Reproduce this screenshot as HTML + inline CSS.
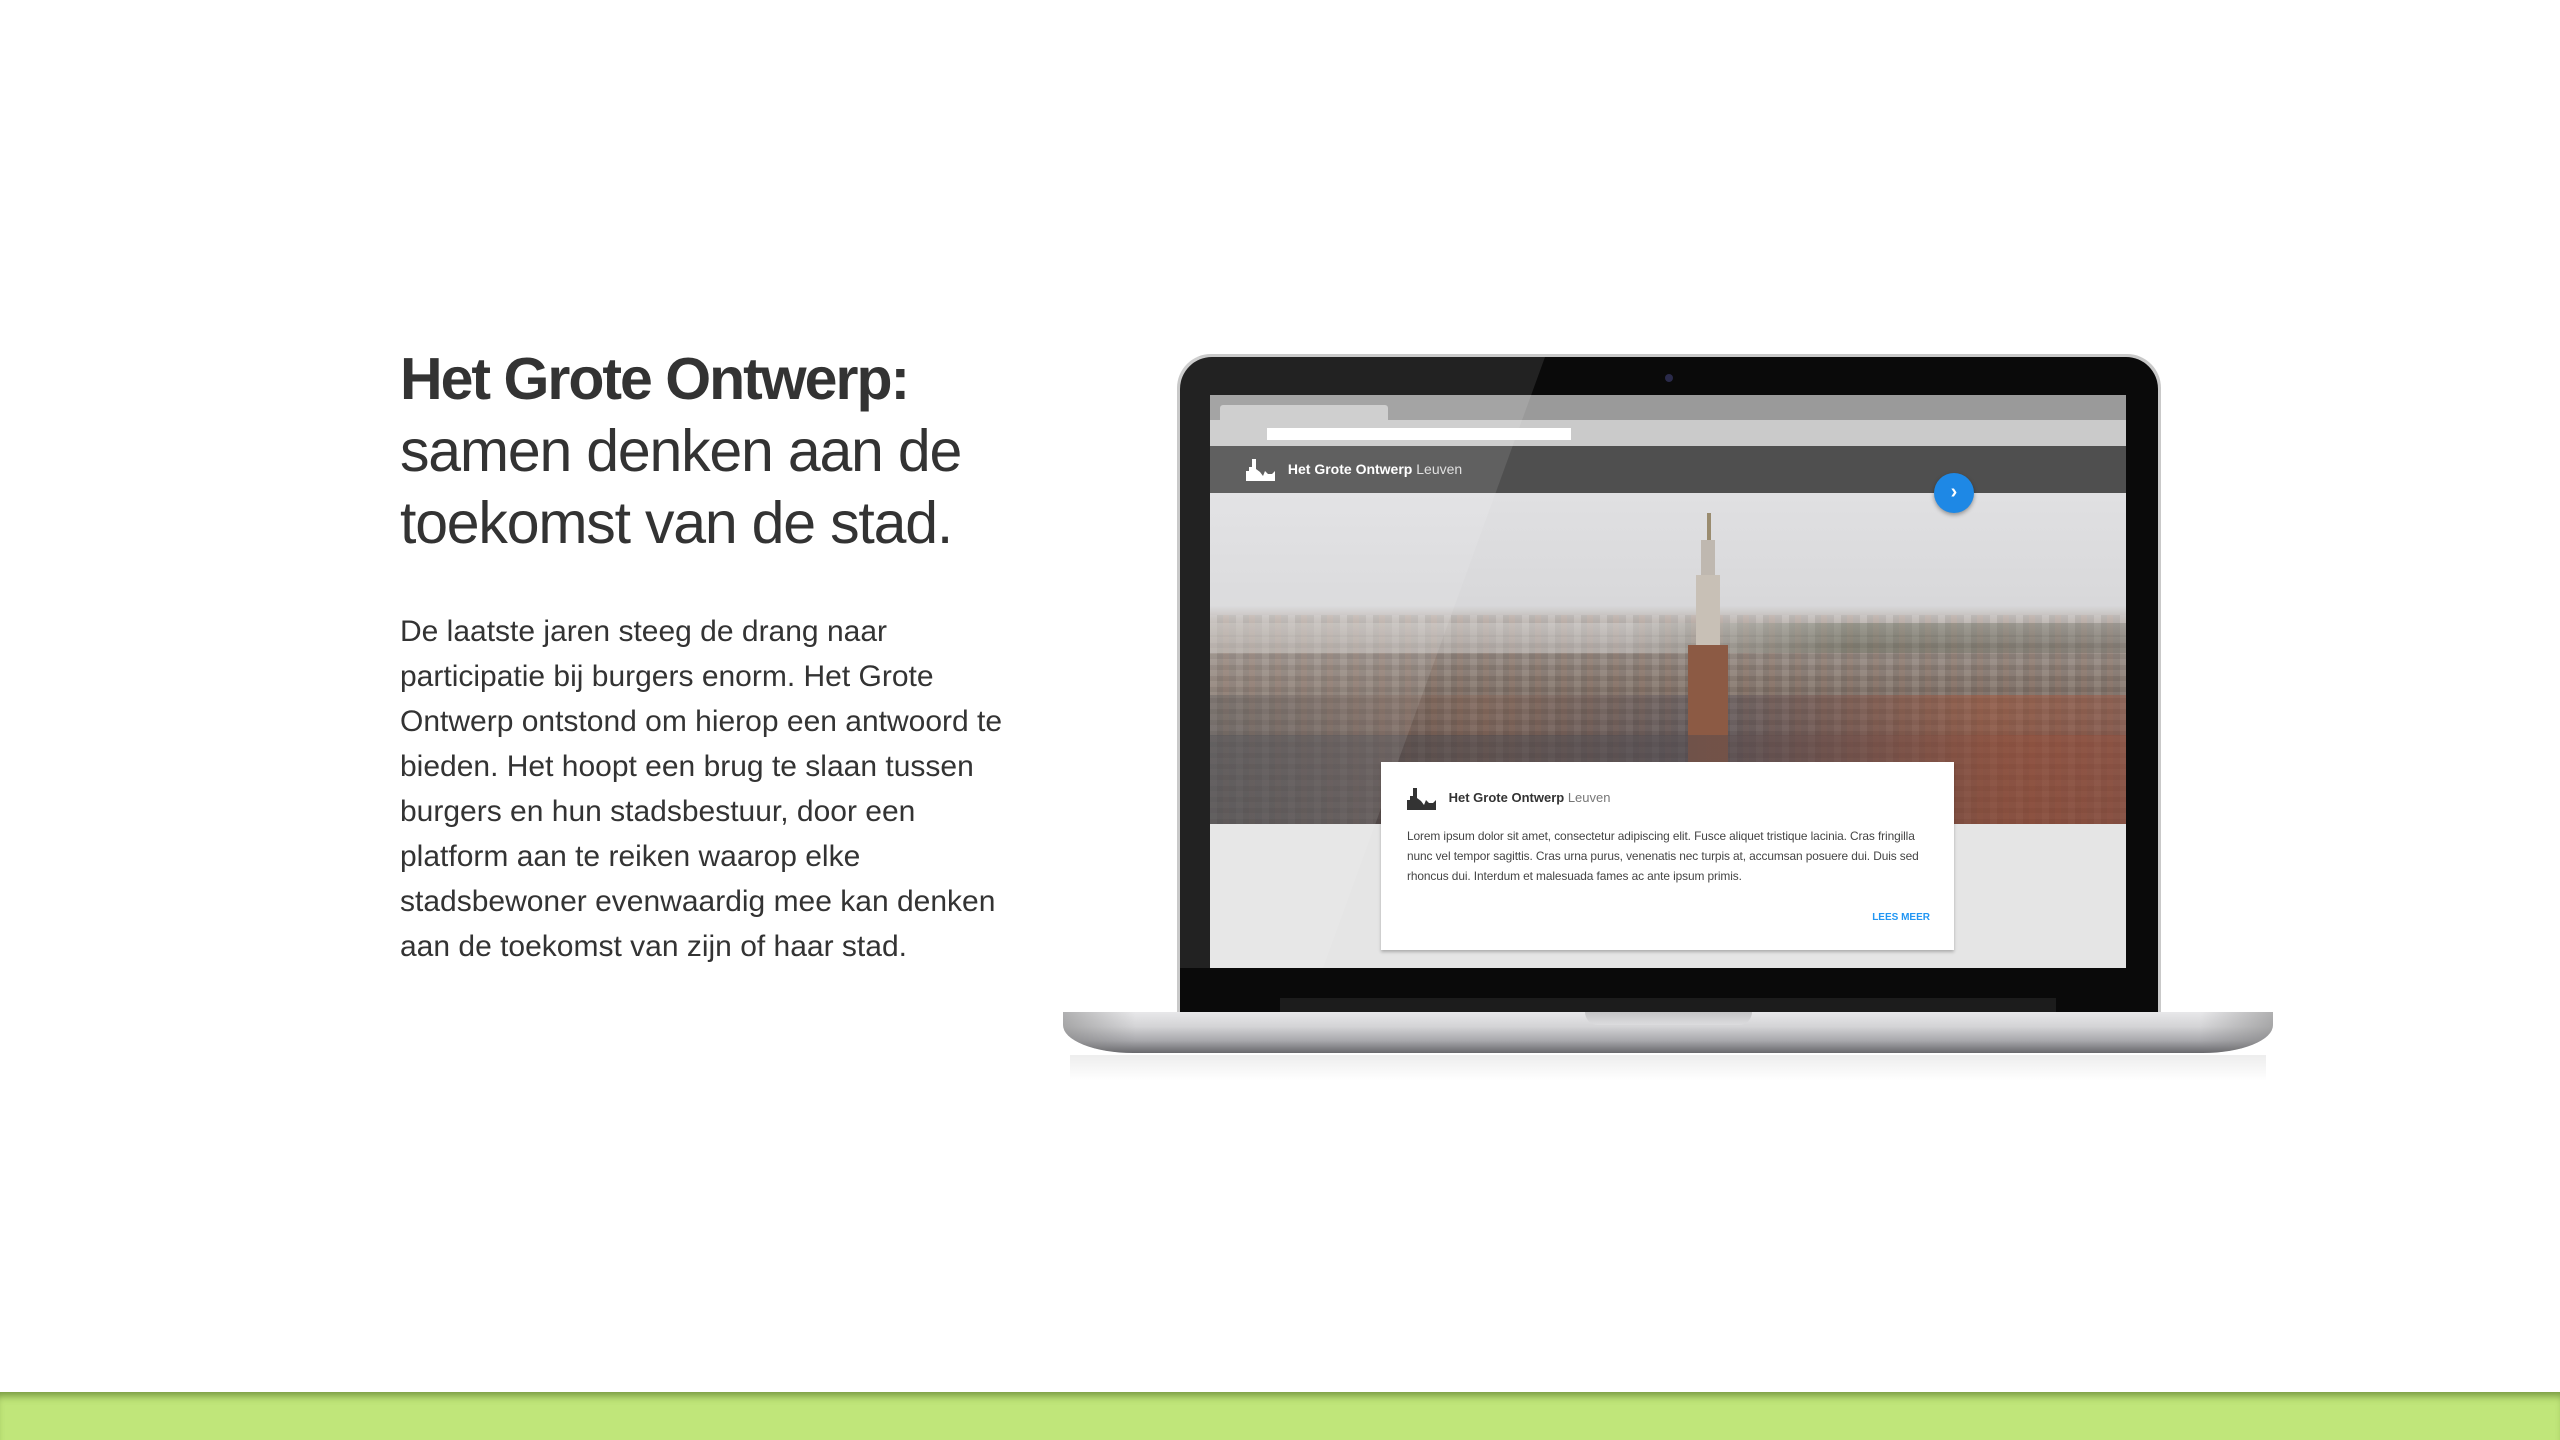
<!DOCTYPE html>
<html><head><meta charset="utf-8"><style>
*{margin:0;padding:0;box-sizing:border-box}
body{width:2560px;height:1440px;background:#fff;position:relative;overflow:hidden;font-family:"Liberation Sans",sans-serif;color:#333}
.abs{position:absolute}
h1{position:absolute;left:400px;top:343px;font-size:59px;line-height:72px;font-weight:normal;letter-spacing:-1.2px;color:#333}
h1 b{font-weight:bold;letter-spacing:-2px}
p.t{position:absolute;left:400px;top:609px;width:612px;font-size:30px;line-height:45px;color:#333}
.green{left:0;top:1392px;width:2560px;height:48px;background:#c0e67a;box-shadow:inset 0 8px 8px -4px rgba(60,90,20,.55)}
.logo{display:inline-block;vertical-align:middle}
</style></head><body>
<h1><b>Het Grote Ontwerp:</b><br>samen denken aan de<br>toekomst van de stad.</h1>
<p class="t">De laatste jaren steeg de drang naar participatie bij burgers enorm. Het Grote Ontwerp ontstond om hierop een antwoord te bieden. Het hoopt een brug te slaan tussen burgers en hun stadsbestuur, door een platform aan te reiken waarop elke stadsbewoner evenwaardig mee kan denken aan de toekomst van zijn of haar stad.</p>

<!-- laptop lid -->
<div class="abs" style="left:1177px;top:354px;width:984px;height:662px;border-radius:34px 34px 0 0;background:#c9c9c9"></div>
<div class="abs" style="left:1180px;top:357px;width:978px;height:656px;border-radius:32px 32px 0 0;background:#0a0a0a"></div>
<div class="abs" style="left:1665px;top:374px;width:8px;height:8px;border-radius:50%;background:#2a2a4a"></div>
<div class="abs" style="left:1280px;top:998px;width:776px;height:14px;background:#1c1c1c"></div>
<!-- screen -->
<div class="abs" style="left:1210px;top:395px;width:916px;height:573px;background:#e5e5e5;overflow:hidden">
  <div class="abs" style="left:0;top:0;width:916px;height:25px;background:#9a9a9a"></div>
  <div class="abs" style="left:10px;top:10px;width:168px;height:16px;background:#cacaca;border-radius:3px 3px 0 0"></div>
  <div class="abs" style="left:0;top:25px;width:916px;height:26px;background:#cacaca"></div>
  <div class="abs" style="left:57px;top:33px;width:304px;height:12px;background:#fff"></div>
  <div class="abs" style="left:0;top:51px;width:916px;height:47px;background:#4f4f4f;color:#fff;font-size:14px;line-height:47px;padding-left:36px">
    <svg class="logo" width="34" height="22" viewBox="0 0 34 22"><path d="M0 22V12h3V8h3V0h4v10l4 3 3 4 2-5 3 3h4l3-3v10z" fill="#fff"/></svg>
    <span style="margin-left:4px"><b>Het Grote Ontwerp</b> <span style="color:#ddd">Leuven</span></span>
  </div>
  <!-- photo -->
  <div class="abs" style="left:0;top:98px;width:916px;height:331px;background:linear-gradient(#e0e0e2 0%,#d8d8da 34%,#c2bcb8 38%,#9a8f88 46%,#85766c 58%,#736660 72%,#625854 100%)"></div>
  <div class="abs" style="left:0;top:220px;width:916px;height:209px;background:repeating-linear-gradient(90deg,rgba(255,255,255,.06) 0 7px,rgba(0,0,0,.06) 7px 13px,rgba(160,80,50,.08) 13px 19px,rgba(40,40,50,.06) 19px 26px)"></div>
  <div class="abs" style="left:0;top:240px;width:916px;height:189px;background:repeating-linear-gradient(0deg,rgba(0,0,0,.05) 0 5px,rgba(255,255,255,.04) 5px 11px)"></div>
  <div class="abs" style="left:0;top:300px;width:916px;height:129px;background:linear-gradient(90deg,rgba(70,70,70,.35),rgba(140,90,70,.25) 30%,rgba(70,70,85,.35) 55%,rgba(170,80,50,.45) 85%,rgba(160,80,60,.4))"></div>
  <div class="abs" style="left:0;top:228px;width:916px;height:30px;background:linear-gradient(90deg,rgba(200,195,190,.5),rgba(220,220,220,.4) 45%,rgba(90,100,80,.35) 70%,rgba(100,100,90,.3))"></div>
  <div class="abs" style="left:497px;top:118px;width:4px;height:30px;background:#9a8c70"></div>
  <div class="abs" style="left:491px;top:145px;width:14px;height:40px;background:#bfb8b0"></div>
  <div class="abs" style="left:486px;top:180px;width:24px;height:75px;background:#c8c0b6"></div>
  <div class="abs" style="left:478px;top:250px;width:40px;height:120px;background:#8c5a44"></div>
  <div class="abs" style="left:0;top:340px;width:916px;height:89px;background:linear-gradient(90deg,rgba(60,60,65,.45),rgba(80,75,80,.5) 50%,rgba(150,70,50,.35) 90%)"></div>
  <!-- card -->
  <div class="abs" style="left:171px;top:367px;width:573px;height:188px;background:#fff;box-shadow:0 2px 3px rgba(0,0,0,.25)">
    <div class="abs" style="left:26px;top:26px;font-size:13px;color:#333;white-space:nowrap">
      <svg class="logo" width="34" height="22" viewBox="0 0 34 22"><path d="M0 22V12h3V8h3V0h4v10l4 3 3 4 2-5 3 3h4l3-3v10z" fill="#333"/></svg>
      <span style="margin-left:4px"><b>Het Grote Ontwerp</b> <span style="color:#777">Leuven</span></span>
    </div>
    <div class="abs" style="left:26px;top:64px;width:525px;font-size:11.9px;line-height:20px;color:#444;letter-spacing:-.1px">Lorem ipsum dolor sit amet, consectetur adipiscing elit. Fusce aliquet tristique lacinia. Cras fringilla nunc vel tempor sagittis. Cras urna purus, venenatis nec turpis at, accumsan posuere dui. Duis sed rhoncus dui. Interdum et malesuada fames ac ante ipsum primis.</div>
    <div class="abs" style="right:24px;top:150px;font-size:10px;color:#2196f3;font-weight:bold">LEES MEER</div>
  </div>
  <div class="abs" style="left:724px;top:78px;width:40px;height:40px;border-radius:50%;background:#1e88e5;box-shadow:0 2px 4px rgba(0,0,0,.35);color:#fff;font-size:20px;line-height:38px;text-align:center;font-weight:bold">›</div>
</div>
<!-- glass reflection -->
<svg class="abs" style="left:0;top:0" width="2560" height="1440"><polygon points="1180,357 1545,357 1323,968 1210,968 1180,968" fill="rgba(255,255,255,.10)"/></svg>
<!-- base -->
<div class="abs" style="left:1063px;top:1012px;width:1210px;height:41px;border-radius:0 0 70px 70px/0 0 28px 28px;background:linear-gradient(#e8e8ea,#d4d4d6 35%,#a8a8ac 70%,#68686c)"></div>
<div class="abs" style="left:1063px;top:1012px;width:1210px;height:41px;border-radius:0 0 70px 70px/0 0 28px 28px;background:linear-gradient(90deg,rgba(120,120,120,.5),rgba(255,255,255,0) 6%,rgba(255,255,255,0) 94%,rgba(120,120,120,.5))"></div>
<div class="abs" style="left:1585px;top:1012px;width:167px;height:13px;border-radius:0 0 14px 14px;background:linear-gradient(#c4c4c6,#dcdcde)"></div>
<div class="abs" style="left:1070px;top:1055px;width:1196px;height:26px;background:linear-gradient(rgba(0,0,0,.07),rgba(0,0,0,0))"></div>
<div class="abs green"></div>
</body></html>
